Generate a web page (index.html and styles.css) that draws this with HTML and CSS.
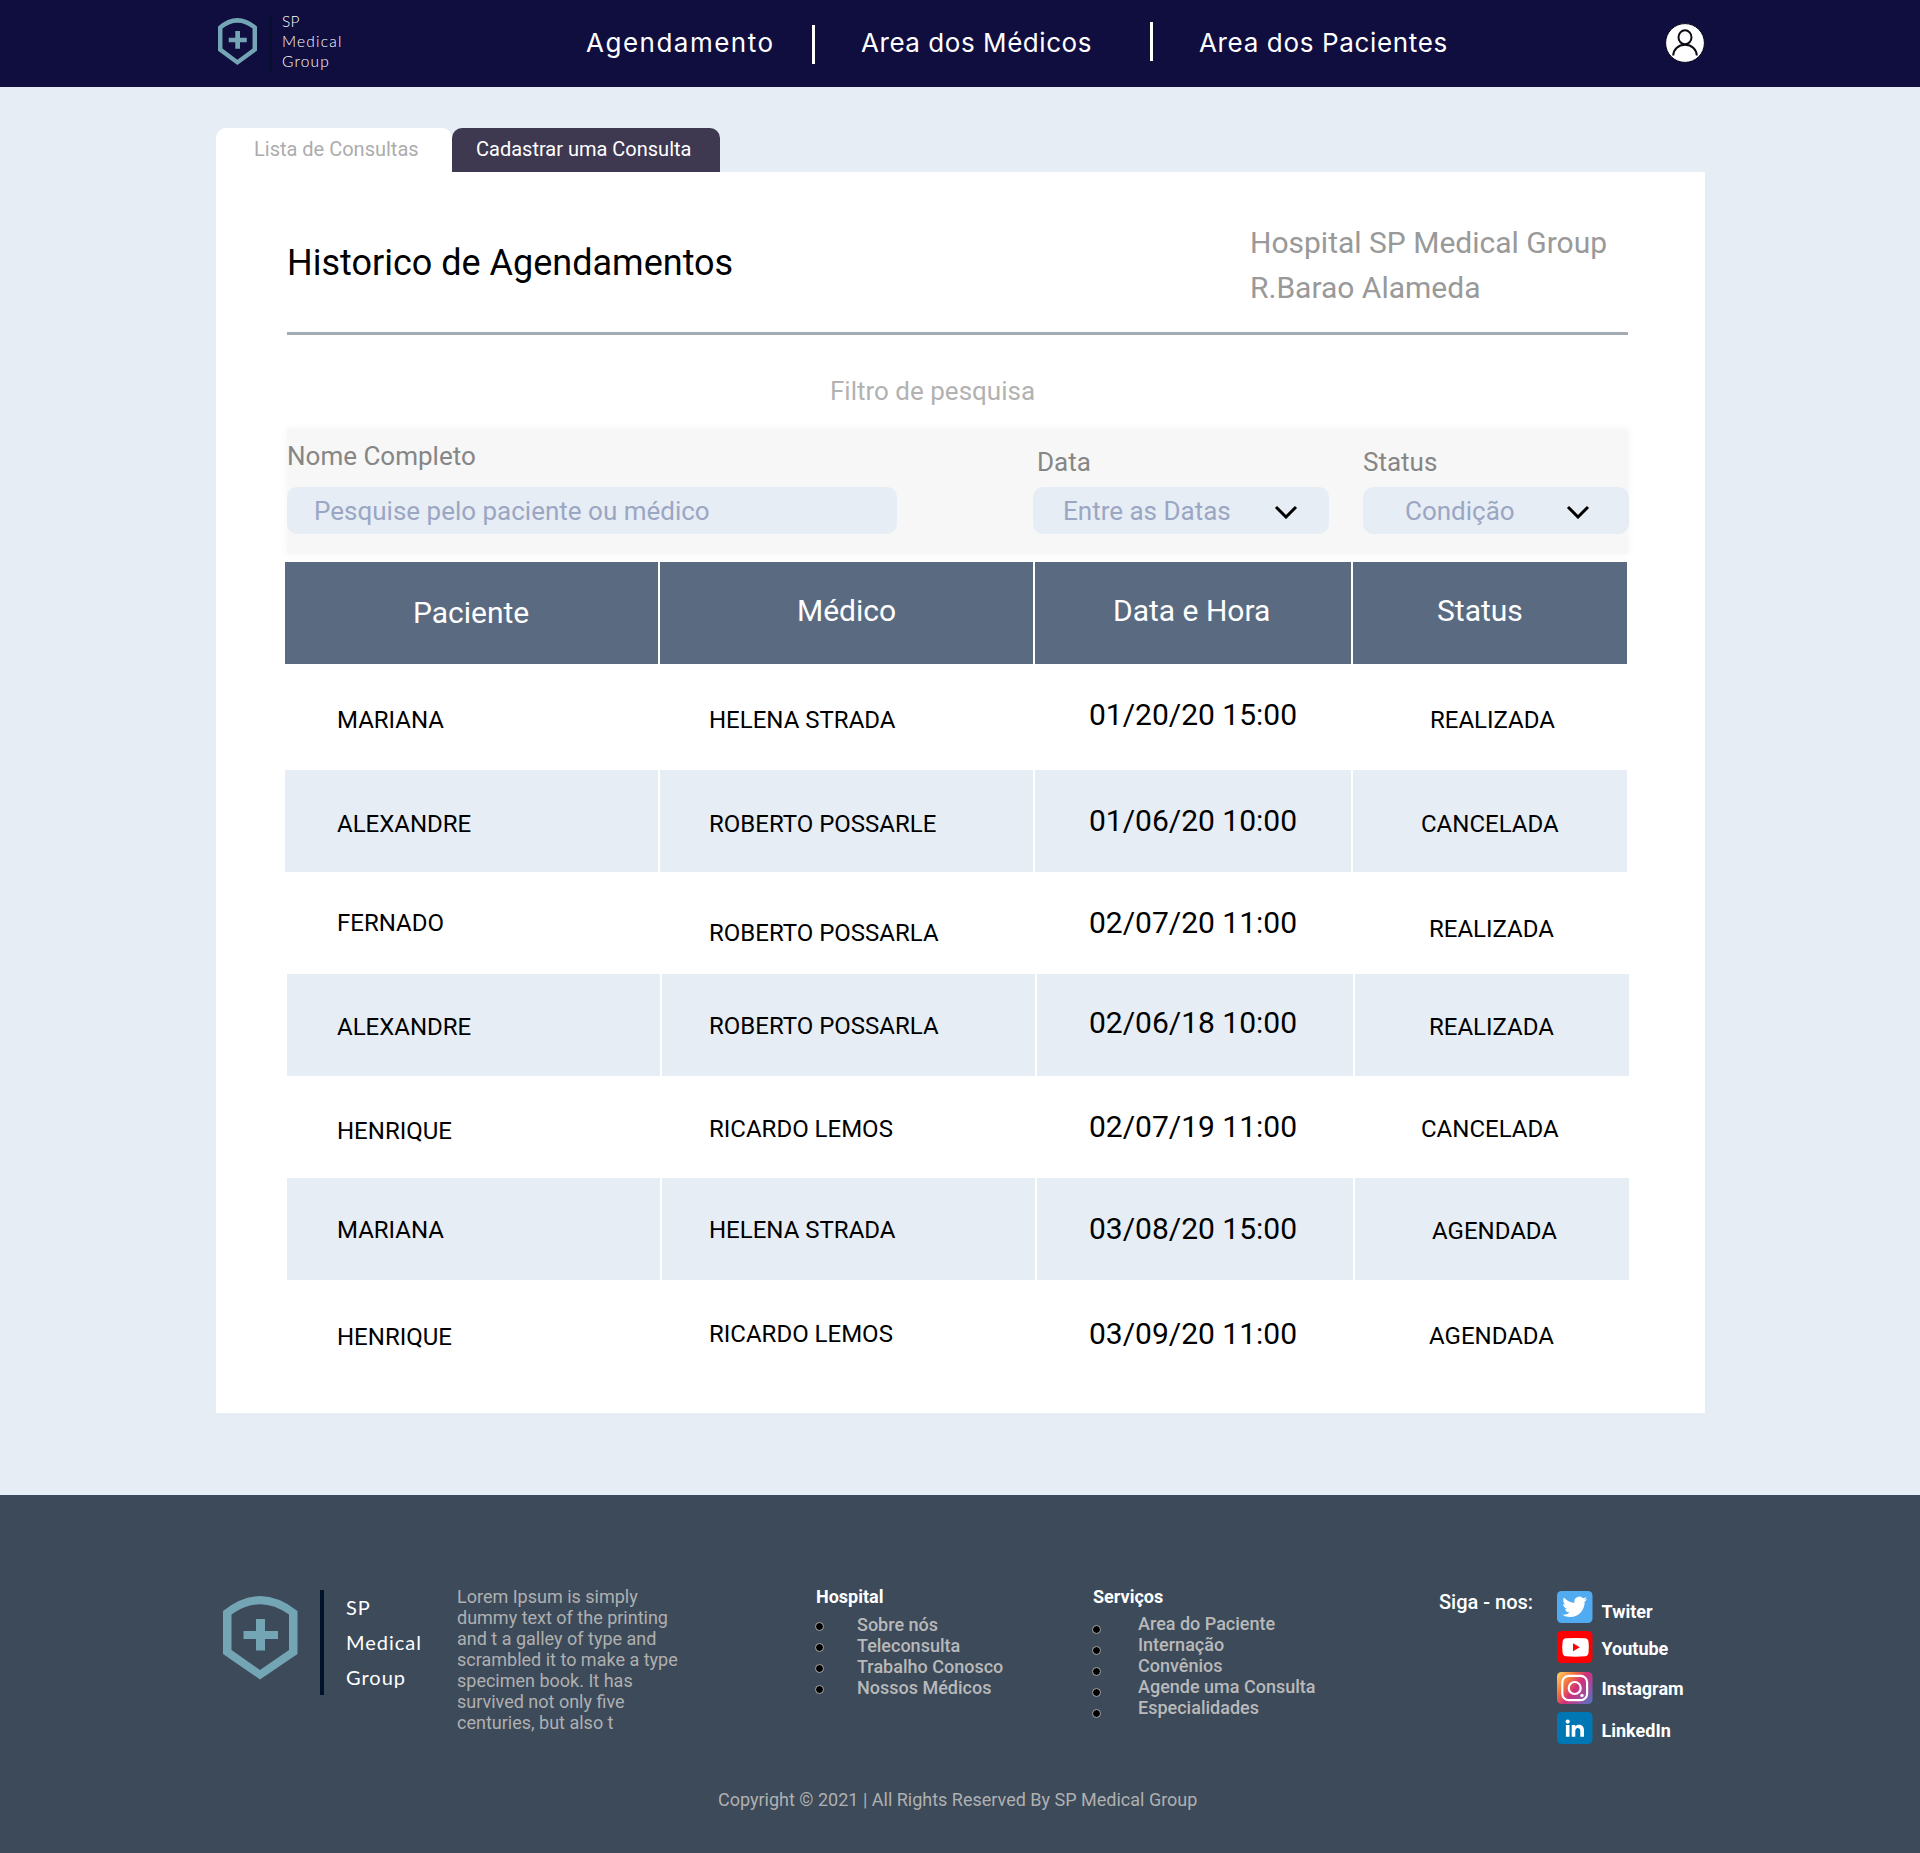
FILE: index.html
```html
<!DOCTYPE html>
<html lang="pt-BR">
<head>
<meta charset="utf-8">
<title>SP Medical Group</title>
<link rel="stylesheet" href="styles.css">
</head>
<body>
<header class="topbar">
  <div class="brand">
    <svg class="brand-mark" viewBox="0 0 74.5 83.5" preserveAspectRatio="none"><path fill="#74a5b5" fill-rule="evenodd" d="M0 15Q37-15 74.5 15V58L37 83.5 0 58ZM8.5 18.5V54L37 74 66 54V18.5Q37-2 8.5 18.5Z"/><path fill="#74a5b5" d="M33 23h9v12h13v8H42v11.500h-9V43H20.500v-8H33z"/></svg>
    <span class="brand-line"></span>
    <div class="brand-name"><span class="b1">SP</span><span class="b2">Medical</span><span class="b3">Group</span></div>
  </div>
  <nav class="menu">
    <a class="m1">Agendamento</a><i class="sep low"></i>
    <a class="m2">Area dos Médicos</a><i class="sep"></i>
    <a class="m3">Area dos Pacientes</a>
  </nav>
  <svg class="avatar" viewBox="0 0 40 40"><circle cx="20" cy="20" r="19.400" fill="#fff" stroke="#06061c" stroke-width="1"/><g fill="none" stroke="#0b0b14" stroke-width="2"><ellipse cx="20" cy="14.300" rx="6.500" ry="7"/><path d="M8.200 32.500C8.400 26.500 13 21.800 20 21.800S31.600 26.500 31.800 32.500"/></g></svg>
</header>

<main class="page">
  <div class="tabs"><a class="tab active">Lista de Consultas</a><a class="tab dark">Cadastrar uma Consulta</a></div>
  <section class="panel">
    <div class="heading">
      <h1>Historico de Agendamentos</h1>
      <p>Hospital SP Medical Group<br>R.Barao Alameda</p>
    </div>
    <h2>Filtro de pesquisa</h2>
    <div class="filters">
      <div class="field name"><label>Nome Completo</label><div class="box"><span>Pesquise pelo paciente ou médico</span></div></div>
      <div class="field date"><label>Data</label><div class="box"><span>Entre as Datas</span><svg class="chev" viewBox="0 0 24 14"><path d="M2 2l10 10L22 2"/></svg></div></div>
      <div class="field status"><label>Status</label><div class="box"><span>Condição</span><svg class="chev" viewBox="0 0 24 14"><path d="M2 2l10 10L22 2"/></svg></div></div>
    </div>
    <div class="table">
      <div class="row head"><div>Paciente</div><div>Médico</div><div>Data e Hora</div><div>Status</div></div>
      <div class="row r1"><div>MARIANA</div><div>HELENA STRADA</div><div>01/20/20 15:00</div><div>REALIZADA</div></div>
      <div class="row r2 tint"><div>ALEXANDRE</div><div>ROBERTO POSSARLE</div><div>01/06/20 10:00</div><div>CANCELADA</div></div>
      <div class="row r3"><div>FERNADO</div><div>ROBERTO POSSARLA</div><div>02/07/20 11:00</div><div>REALIZADA</div></div>
      <div class="row r4 tint shift"><div>ALEXANDRE</div><div>ROBERTO POSSARLA</div><div>02/06/18 10:00</div><div>REALIZADA</div></div>
      <div class="row r5"><div>HENRIQUE</div><div>RICARDO LEMOS</div><div>02/07/19 11:00</div><div>CANCELADA</div></div>
      <div class="row r6 tint shift"><div>MARIANA</div><div>HELENA STRADA</div><div>03/08/20 15:00</div><div>AGENDADA</div></div>
      <div class="row r7"><div>HENRIQUE</div><div>RICARDO LEMOS</div><div>03/09/20 11:00</div><div>AGENDADA</div></div>
    </div>
  </section>
</main>

<footer class="footer">
  <div class="footer-top">
    <svg class="footer-mark" viewBox="0 0 74.5 83.5"><path fill="#74a5b5" fill-rule="evenodd" d="M0 15Q37-15 74.5 15V58L37 83.5 0 58ZM8.500 18.500V54L37 74 66 54V18.500Q37-2 8.500 18.500Z"/><path fill="#74a5b5" d="M33 23h9v12h13v8H42v11.500h-9V43H20.500v-8H33z"/></svg>
    <span class="footer-line"></span>
    <div class="footer-name"><span class="b1">SP</span><span class="b2">Medical</span><span class="b3">Group</span></div>
    <p class="about">Lorem Ipsum is simply<br>dummy text of the printing<br>and t a galley of type and<br>scrambled it to make a type<br>specimen book. It has<br>survived not only five<br>centuries, but also t</p>
    <div class="links hospital">
      <h3>Hospital</h3>
      <ul><li>Sobre nós</li><li>Teleconsulta</li><li>Trabalho Conosco</li><li>Nossos Médicos</li></ul>
    </div>
    <div class="links services">
      <h3>Serviços</h3>
      <ul><li>Area do Paciente</li><li>Internação</li><li>Convênios</li><li>Agende uma Consulta</li><li>Especialidades</li></ul>
    </div>
    <div class="follow">Siga - nos:</div>
    <div class="social">
      <a class="s1"><svg viewBox="0 0 35.500 32"><rect width="35.500" height="32" rx="4.500" fill="#50abf1"/><path fill="#fff" transform="translate(5.200 3.300) scale(1.040)" d="M23.953 4.570a10 10 0 01-2.825.775 4.958 4.958 0 002.163-2.723c-.951.555-2.005.959-3.127 1.184a4.920 4.920 0 00-8.384 4.482C7.690 8.095 4.067 6.130 1.640 3.162a4.822 4.822 0 00-.666 2.475c0 1.710.870 3.213 2.188 4.096a4.904 4.904 0 01-2.228-.616v.060a4.923 4.923 0 003.946 4.827 4.996 4.996 0 01-2.212.085 4.936 4.936 0 004.604 3.417 9.867 9.867 0 01-6.102 2.105c-.390 0-.779-.023-1.170-.067a13.995 13.995 0 007.557 2.209c9.053 0 13.998-7.496 13.998-13.985 0-.210 0-.420-.015-.630A9.935 9.935 0 0024 4.590z"/></svg><span>Twiter</span></a>
      <a class="s2"><svg viewBox="0 0 35.500 32"><rect width="35.500" height="32" rx="4.500" fill="#f00"/><path fill="#fff" d="M9 7.300Q18.500 6.500 28 7.300Q31 7.500 31.500 10.500Q32.200 16 31.500 22Q31 25 28 25.300Q18.500 26 9 25.300Q6 25 5.600 22Q4.800 16 5.600 10.500Q6 7.500 9 7.300Z"/><path fill="#f00" d="M16 12.200l6.800 4-6.800 4z"/></svg><span>Youtube</span></a>
      <a class="s3"><svg viewBox="0 0 35.500 32"><defs><linearGradient id="ig" x1="0" y1="0.150" x2="1" y2="0.850"><stop offset="0" stop-color="#ffc45c"/><stop offset=".28" stop-color="#f2703f"/><stop offset=".52" stop-color="#d0307b"/><stop offset=".75" stop-color="#a14a9c"/><stop offset="1" stop-color="#5b6fc0"/></linearGradient></defs><rect width="35.500" height="32" rx="4.500" fill="url(#ig)"/><g fill="none" stroke="#fff" stroke-width="2.200"><rect x="5.300" y="3.800" width="24.800" height="24.400" rx="6.500"/><circle cx="17.700" cy="16" r="6"/></g><circle cx="25" cy="23.400" r="1.700" fill="#fff"/></svg><span>Instagram</span></a>
      <a class="s4"><svg viewBox="0 0 35.500 32"><rect width="35.500" height="32" rx="4.500" fill="#0077b5"/><circle cx="10.700" cy="9.600" r="2.100" fill="#fff"/><path fill="#fff" d="M8.900 13h3.600v11.700H8.900zM14.700 13h3.500v1.600c1.900-2.900 8.800-2.600 8.800 3.600v6.500h-3.700v-5.800c0-4-5-3.700-5 0v5.800h-3.600z"/></svg><span>LinkedIn</span></a>
    </div>
  </div>
  <p class="copyright">Copyright © 2021 | All Rights Reserved By SP Medical Group</p>
</footer>
</body>
</html>
```
FILE: styles.css
```css
* { box-sizing: border-box; margin: 0; padding: 0; }
body { background: #e6edf5; font-family: Roboto, "Liberation Sans", sans-serif; width: 1920px; }
span, a, label, h1, h2, h3, p, li { white-space: nowrap; }

/* top bar */
.topbar { height: 87px; background: #100d3f; display: flex; padding-left: 218px; color: #fff; }
.brand { display: flex; width: 368px; }
.brand-mark { width: 39px; height: 47px; margin-top: 18px; }
.brand-line { width: 2px; height: 58px; margin: 15px 10px 0 13px; background: #07102f; }
.brand-name, .footer-name { display: flex; flex-direction: column; font-family: Lato, sans-serif; font-weight: 400; }
.brand-name { font-size: 15.5px; line-height: 20px; padding-top: 11px; font-weight: 300; letter-spacing: 1.2px; }
.brand-name .b1 { letter-spacing: 0.3px; }
.menu { display: flex; width: 1079px; font-family: Inter, sans-serif; font-size: 26px; line-height: 40px; }
.menu a { padding-top: 23px; }
.m1 { width: 226px; letter-spacing: 1.5px; }
.m2, .m3 { margin-left: 46px; }
.m2 { width: 289px; letter-spacing: 0.55px; }
.m3 { letter-spacing: 0.65px; }
.sep { width: 3px; height: 39px; margin-top: 22px; background: #fff; }
.sep.low { margin-top: 25px; }
.avatar { width: 40px; height: 40px; margin-top: 23px; }

/* tabs and panel */
.page { padding: 41px 215px 0 216px; height: 1408px; }
.tabs { display: flex; height: 44px; font-size: 20px; line-height: 24px; }
.tab { height: 44px; padding-top: 9px; border-radius: 10px 10px 0 0; }
.tab.active { width: 236px; padding-left: 38px; background: #fff; color: #acacac; }
.tab.dark { width: 268px; padding-left: 24px; background: #3e3850; color: #fff; }
.panel { height: 1241px; background: #fff; }
.heading { display: flex; justify-content: space-between; height: 163px; margin: 0 77px 0 71px; border-bottom: 3px solid #a3abb5; }
.heading h1 { font-size: 36px; font-weight: 400; line-height: 42px; padding-top: 70px; }
.heading p { width: 378px; font-size: 30px; line-height: 45px; padding-top: 48px; color: #999; }
h2 { font-size: 26px; line-height: 30px; font-weight: 400; color: #b2b2b2; padding: 41px 0 0 614px; height: 94px; }

/* filters */
.filters { display: flex; height: 125px; margin: 0 77px 0 71px; background: #f7f7f7; box-shadow: 0 0 8px 1px #f7f7f7; font-size: 26px; line-height: 30px; }
.field { display: flex; flex-direction: column; flex: none; }
.field label { color: #868686; height: 46px; margin-top: 12px; }
.field .box { display: flex; height: 47px; border-radius: 10px; background: #e6edf5; color: #9ba6c3; padding-top: 9px; }
.name { width: 610px; }
.name .box { padding-left: 27px; }
.date { width: 296px; margin-left: 136px; }
.date label, .status label { padding-top: 6px; }
.date label { padding-left: 4px; }
.date .box { padding-left: 30px; }
.date span { width: 211px; }
.status { width: 266px; margin-left: 34px; }
.status .box { padding-left: 42px; }
.status span { width: 161px; }
.chev { width: 24px; height: 14px; margin-top: 9px; fill: none; stroke: #000; stroke-width: 3; }

/* table */
.table { margin: 8px 0 0 69px; font-size: 24px; line-height: 28px; }
.row { display: grid; grid-template-columns: 373px 373px 316px 273.5px; column-gap: 2px; height: 102px; }
.row > div { padding: var(--y) 0 0 var(--x); white-space: nowrap; }
.row > div:nth-child(1) { --x: 52px; }
.row > div:nth-child(2) { --x: 49px; }
.row > div:nth-child(3) { --x: 54px; font-size: 30px; line-height: 36px; }
.row > div:nth-child(4) { --x: 76px; }
.row.head > div { background: #5a6b81; color: #fff; font-size: 30px; line-height: 36px; --y: 31px; }
.row.head > div:nth-child(1) { --x: 128px; --y: 33px; }
.row.head > div:nth-child(2) { --x: 137px; }
.row.head > div:nth-child(3) { --x: 78px; }
.row.head > div:nth-child(4) { --x: 84px; }
.tint > div { background: #e6edf5; }
.row.shift { margin-left: 2px; }
.row.shift > div:nth-child(1) { --x: 50px; }
.row.shift > div:nth-child(2) { --x: 47px; }
.row.shift > div:nth-child(3) { --x: 52px; }
.row.shift > div:nth-child(4) { --x: 74px; }
.r1 { height: 106px; --y: 42px; }
.r1 > div:nth-child(3) { --y: 33px; }
.row.r1 > div:nth-child(4) { --x: 77px; }
.r2 { --y: 40px; }
.r2 > div:nth-child(3) { --y: 33px; }
.row.r2 > div:nth-child(4), .row.r5 > div:nth-child(4) { --x: 68px; }
.r3 { --y: 37px; }
.r3 > div:nth-child(2) { --y: 47px; }
.r3 > div:nth-child(3) { --y: 33px; }
.r3 > div:nth-child(4) { --y: 43px; }
.r4 { --y: 39px; }
.r4 > div:nth-child(2) { --y: 38px; }
.r4 > div:nth-child(3) { --y: 31px; }
.r5 { --y: 39px; }
.r5 > div:nth-child(1) { --y: 41px; }
.r5 > div:nth-child(3) { --y: 33px; }
.r6 { --y: 38px; }
.r6 > div:nth-child(3) { --y: 33px; }
.row.r6 > div:nth-child(4) { --x: 77px; --y: 39px; }
.r7 { --y: 43px; }
.r7 > div:nth-child(2) { --y: 40px; }
.r7 > div:nth-child(3) { --y: 36px; }
.r7 > div:nth-child(4) { --y: 42px; }

/* footer */
.footer { height: 358px; background: #3c4a5a; color: #b0b0b0; font-size: 18px; line-height: 21px; }
.footer-top { display: flex; height: 294px; padding: 91px 0 0 223px; }
.footer-mark { width: 74.5px; height: 83.5px; margin-top: 10px; flex: none; }
.footer-line { width: 4px; height: 105px; margin: 4px 22px 0 22.5px; background: #00132b; }
.footer-name { width: 111px; color: #fff; font-size: 20px; line-height: 35px; padding-top: 4px; letter-spacing: 1px; }
.about { width: 359px; }
.links h3 { font-size: 18px; font-weight: 700; color: #fff; height: 28px; }
.links ul { list-style: none; font-weight: 500; color: #b9b9b9; }
.links li { display: flex; height: 21px; }
.links li::before { content: ""; width: 7px; height: 7px; margin-top: 8px; border: 1px solid #aaa; border-radius: 50%; background: #000; }
.hospital { width: 277px; }
.hospital li::before { margin-right: 33px; }
.services { width: 346px; }
.services ul { margin-top: -1px; }
.services li::before { margin: 12px 37px 0 0; }
.links ul { margin-left: -1px; }
.follow { width: 118px; font-size: 20px; font-weight: 500; color: #fff; line-height: 24px; padding-top: 4px; }
.social { display: flex; flex-direction: column; gap: 8.300px; padding-top: 5px; }
.social a { display: flex; height: 32px; color: #fff; font-weight: 700; }
.social svg { width: 35.500px; height: 32px; margin-right: 9px; }
.social span { padding-top: 10px; }
.social .s2 span { padding-top: 7px; }
.social .s3 span { padding-top: 6px; }
.social .s4 span { padding-top: 8px; }
.copyright { padding-left: 718px; }
```
